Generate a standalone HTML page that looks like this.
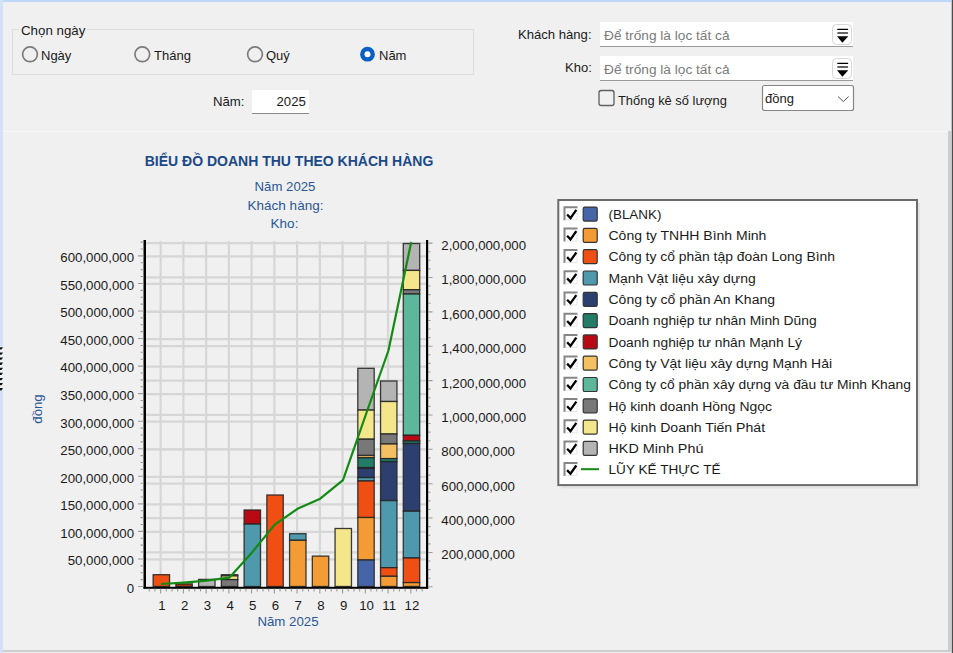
<!DOCTYPE html>
<html><head><meta charset="utf-8">
<style>
html,body{margin:0;padding:0;}
body{width:953px;height:653px;overflow:hidden;background:#f0f0f0;position:relative;font-family:"Liberation Sans",sans-serif;color:#1a1a1a;}
.a{position:absolute;white-space:nowrap;}
.t13{font-size:13px;line-height:15px;}
</style></head><body>
<!-- window frame -->
<div class="a" style="left:0;top:0;width:953px;height:2px;background:#bdd7f8"></div>
<div class="a" style="left:0;top:0;width:3px;height:653px;background:#d2e1f5"></div>
<div class="a" style="left:951px;top:0;width:1px;height:653px;background:#a9c8f2"></div>
<div class="a" style="left:952px;top:0;width:1px;height:653px;background:#5a4a3a"></div>
<div class="a" style="left:0;top:346px;width:3px;height:45px;background:#eef2f8"></div><svg class="a" style="left:0;top:0" width="4" height="653"><path d="M0 347.30H3L1.5 349.60H0Z" fill="#111"/><path d="M0 352.40H3L1.5 354.70H0Z" fill="#111"/><path d="M0 357.50H3L1.5 359.80H0Z" fill="#111"/><path d="M0 362.60H3L1.5 364.90H0Z" fill="#111"/><path d="M0 367.70H3L1.5 370.00H0Z" fill="#111"/><path d="M0 372.80H3L1.5 375.10H0Z" fill="#111"/><path d="M0 377.90H3L1.5 380.20H0Z" fill="#111"/><path d="M0 383.00H3L1.5 385.30H0Z" fill="#111"/><path d="M0 388.10H3L1.5 390.40H0Z" fill="#111"/></svg>

<!-- group box -->
<div class="a" style="left:12px;top:29px;width:460px;height:44px;border:1px solid #dcdcdc"></div>
<div class="a t13" style="left:19px;top:23px;padding:0 2px;background:#f0f0f0;font-size:13.3px">Chọn ngày</div>

<svg class="a" style="left:0;top:0" width="953" height="130">
 <circle cx="30" cy="54.3" r="7.4" fill="none" stroke="#7c7c7c" stroke-width="1.7"/>
 <circle cx="142.3" cy="54.3" r="7.4" fill="none" stroke="#7c7c7c" stroke-width="1.7"/>
 <circle cx="255" cy="54.3" r="7.4" fill="none" stroke="#7c7c7c" stroke-width="1.7"/>
 <circle cx="367.5" cy="54.2" r="7.4" fill="#0a5fc2"/><circle cx="367.5" cy="54.2" r="3" fill="#fff"/>
 <!-- checkbox -->
 <rect x="599" y="90.5" width="15" height="15" rx="2.2" fill="none" stroke="#5f5f5f" stroke-width="1.3"/>
</svg>
<div class="a t13" style="left:41px;top:48px">Ngày</div>
<div class="a t13" style="left:154px;top:48px">Tháng</div>
<div class="a t13" style="left:266px;top:48px">Quý</div>
<div class="a t13" style="left:379px;top:48px">Năm</div>

<div class="a t13" style="left:213px;top:94px;font-size:13.2px">Năm:</div>
<div class="a" style="left:252px;top:90px;width:57px;height:23px;background:#fff;border-bottom:1px solid #8a8a8a"></div>
<div class="a t13" style="left:276.5px;top:94px;font-size:13.2px">2025</div>

<!-- right filters -->
<div class="a t13" style="left:518px;top:26.7px;font-size:13.1px">Khách hàng:</div>
<div class="a" style="left:600px;top:22px;width:253px;height:24px;background:#fff;border-bottom:1px solid #9a9a9a"></div>
<div class="a t13" style="left:604px;top:27.5px;color:#7a7a7a;font-size:13.7px">Để trống là lọc tất cả</div>
<div class="a t13" style="left:565px;top:60.4px">Kho:</div>
<div class="a" style="left:600px;top:56px;width:253px;height:24px;background:#fff;border-bottom:1px solid #9a9a9a"></div>
<div class="a t13" style="left:604px;top:61.5px;color:#7a7a7a;font-size:13.7px">Để trống là lọc tất cả</div>
<svg class="a" style="left:0;top:0" width="953" height="130">
 <rect x="832.5" y="24.5" width="19" height="20" rx="4" fill="#fff" stroke="#d6d6d6"/>
 <rect x="837.2" y="28.8" width="11" height="1.3" rx="0.6" fill="#000"/>
 <rect x="837.2" y="32.3" width="11" height="1.4" rx="0.6" fill="#333"/>
 <path d="M837 36.2 H848.3 L842.4 42.8 Z" fill="#000"/>
 <rect x="832.5" y="58.5" width="19" height="20" rx="4" fill="#fff" stroke="#d6d6d6"/>
 <rect x="837.2" y="62.8" width="11" height="1.3" rx="0.6" fill="#000"/>
 <rect x="837.2" y="66.3" width="11" height="1.4" rx="0.6" fill="#333"/>
 <path d="M837 70.2 H848.3 L842.4 76.8 Z" fill="#000"/>
 <rect x="762.5" y="85.5" width="91" height="25" rx="2" fill="#fff" stroke="#858585" stroke-width="1.2"/>
 <path d="M838 96.5 L843.3 101.5 L848.6 96.5" fill="none" stroke="#555" stroke-width="1"/>
</svg>
<div class="a t13" style="left:618px;top:92.5px;font-size:12.9px">Thống kê số lượng</div>
<div class="a t13" style="left:765px;top:91px">đồng</div>

<!-- chart panel border -->
<div class="a" style="left:3px;top:131px;width:946px;height:1px;background:#f7f7f7"></div>
<div class="a" style="left:948px;top:131px;width:3px;height:521px;background:#cdcdcd"></div>
<div class="a" style="left:3px;top:650px;width:948px;height:2px;background:#cdcdcd"></div>

<div id="chart">
<svg class="a" style="left:0;top:0;font-family:&quot;Liberation Sans&quot;,sans-serif" width="953" height="653">
<path d="M160.65 241V586.5 M183.39 241V586.5 M206.13 241V586.5 M228.87 241V586.5 M251.61 241V586.5 M274.35 241V586.5 M297.09 241V586.5 M319.83 241V586.5 M342.57 241V586.5 M365.31 241V586.5 M388.05 241V586.5 M410.79 241V586.5" stroke="#d6d6d6" stroke-width="2.2" fill="none"/>
<path d="M146 559.45H426 M146 531.90H426 M146 504.35H426 M146 476.80H426 M146 449.25H426 M146 421.70H426 M146 394.15H426 M146 366.60H426 M146 339.05H426 M146 311.50H426 M146 283.95H426 M146 256.40H426" stroke="#d6d6d6" stroke-width="2.2" fill="none"/>
<path d="M146 552.43H426 M146 518.06H426 M146 483.69H426 M146 449.32H426 M146 414.95H426 M146 380.58H426 M146 346.21H426 M146 311.84H426 M146 277.47H426 M146 243.10H426" stroke="#d6d6d6" stroke-width="2.2" fill="none"/>
<rect x="153.15" y="574.70" width="16.4" height="11.80" fill="#f04f14" stroke="#262626" stroke-width="1.3" stroke-opacity="0.9"/>
<rect x="175.89" y="583.90" width="16.4" height="2.60" fill="#a8380f" stroke="#262626" stroke-width="1.3" stroke-opacity="0.9"/>
<rect x="198.63" y="579.40" width="16.4" height="7.10" fill="#b4b4b4" stroke="#262626" stroke-width="1.3" stroke-opacity="0.9"/>
<rect x="221.37" y="574.70" width="16.4" height="1.20" fill="#b4b4b4" stroke="#262626" stroke-width="1.3" stroke-opacity="0.9"/>
<rect x="221.37" y="575.90" width="16.4" height="3.70" fill="#f4e68a" stroke="#262626" stroke-width="1.3" stroke-opacity="0.9"/>
<rect x="221.37" y="579.60" width="16.4" height="6.90" fill="#787878" stroke="#262626" stroke-width="1.3" stroke-opacity="0.9"/>
<rect x="244.11" y="510.00" width="16.4" height="14.10" fill="#b80a12" stroke="#262626" stroke-width="1.3" stroke-opacity="0.9"/>
<rect x="244.11" y="524.10" width="16.4" height="62.40" fill="#4e99ab" stroke="#262626" stroke-width="1.3" stroke-opacity="0.9"/>
<rect x="266.85" y="495.00" width="16.4" height="91.50" fill="#f04f14" stroke="#262626" stroke-width="1.3" stroke-opacity="0.9"/>
<rect x="289.59" y="533.70" width="16.4" height="6.60" fill="#4e99ab" stroke="#262626" stroke-width="1.3" stroke-opacity="0.9"/>
<rect x="289.59" y="540.30" width="16.4" height="46.20" fill="#f39c35" stroke="#262626" stroke-width="1.3" stroke-opacity="0.9"/>
<rect x="312.33" y="556.10" width="16.4" height="30.40" fill="#f39c35" stroke="#262626" stroke-width="1.3" stroke-opacity="0.9"/>
<rect x="335.07" y="528.50" width="16.4" height="58.00" fill="#f4e68a" stroke="#262626" stroke-width="1.3" stroke-opacity="0.9"/>
<rect x="357.81" y="368.30" width="16.4" height="41.80" fill="#b4b4b4" stroke="#262626" stroke-width="1.3" stroke-opacity="0.9"/>
<rect x="357.81" y="410.10" width="16.4" height="29.10" fill="#f4e68a" stroke="#262626" stroke-width="1.3" stroke-opacity="0.9"/>
<rect x="357.81" y="439.20" width="16.4" height="16.30" fill="#787878" stroke="#262626" stroke-width="1.3" stroke-opacity="0.9"/>
<rect x="357.81" y="455.50" width="16.4" height="2.30" fill="#f4c062" stroke="#262626" stroke-width="1.3" stroke-opacity="0.9"/>
<rect x="357.81" y="457.80" width="16.4" height="9.80" fill="#227c68" stroke="#262626" stroke-width="1.3" stroke-opacity="0.9"/>
<rect x="357.81" y="467.60" width="16.4" height="0.80" fill="#b80a12" stroke="#262626" stroke-width="1.3" stroke-opacity="0.9"/>
<rect x="357.81" y="468.40" width="16.4" height="9.20" fill="#2c3f6e" stroke="#262626" stroke-width="1.3" stroke-opacity="0.9"/>
<rect x="357.81" y="477.60" width="16.4" height="3.40" fill="#4e99ab" stroke="#262626" stroke-width="1.3" stroke-opacity="0.9"/>
<rect x="357.81" y="481.00" width="16.4" height="36.50" fill="#f04f14" stroke="#262626" stroke-width="1.3" stroke-opacity="0.9"/>
<rect x="357.81" y="517.50" width="16.4" height="42.50" fill="#f39c35" stroke="#262626" stroke-width="1.3" stroke-opacity="0.9"/>
<rect x="357.81" y="560.00" width="16.4" height="26.50" fill="#4565a8" stroke="#262626" stroke-width="1.3" stroke-opacity="0.9"/>
<rect x="380.55" y="381.00" width="16.4" height="20.50" fill="#b4b4b4" stroke="#262626" stroke-width="1.3" stroke-opacity="0.9"/>
<rect x="380.55" y="401.50" width="16.4" height="32.50" fill="#f4e68a" stroke="#262626" stroke-width="1.3" stroke-opacity="0.9"/>
<rect x="380.55" y="434.00" width="16.4" height="10.00" fill="#787878" stroke="#262626" stroke-width="1.3" stroke-opacity="0.9"/>
<rect x="380.55" y="444.00" width="16.4" height="14.60" fill="#f4c062" stroke="#262626" stroke-width="1.3" stroke-opacity="0.9"/>
<rect x="380.55" y="458.60" width="16.4" height="3.00" fill="#227c68" stroke="#262626" stroke-width="1.3" stroke-opacity="0.9"/>
<rect x="380.55" y="461.60" width="16.4" height="39.00" fill="#2c3f6e" stroke="#262626" stroke-width="1.3" stroke-opacity="0.9"/>
<rect x="380.55" y="500.60" width="16.4" height="67.10" fill="#4e99ab" stroke="#262626" stroke-width="1.3" stroke-opacity="0.9"/>
<rect x="380.55" y="567.70" width="16.4" height="8.60" fill="#f04f14" stroke="#262626" stroke-width="1.3" stroke-opacity="0.9"/>
<rect x="380.55" y="576.30" width="16.4" height="10.20" fill="#f39c35" stroke="#262626" stroke-width="1.3" stroke-opacity="0.9"/>
<rect x="403.29" y="243.50" width="16.4" height="26.90" fill="#b4b4b4" stroke="#262626" stroke-width="1.3" stroke-opacity="0.9"/>
<rect x="403.29" y="270.40" width="16.4" height="19.30" fill="#f4e68a" stroke="#262626" stroke-width="1.3" stroke-opacity="0.9"/>
<rect x="403.29" y="289.70" width="16.4" height="4.30" fill="#787878" stroke="#262626" stroke-width="1.3" stroke-opacity="0.9"/>
<rect x="403.29" y="294.00" width="16.4" height="141.30" fill="#5db79b" stroke="#262626" stroke-width="1.3" stroke-opacity="0.9"/>
<rect x="403.29" y="435.30" width="16.4" height="5.70" fill="#b80a12" stroke="#262626" stroke-width="1.3" stroke-opacity="0.9"/>
<rect x="403.29" y="441.00" width="16.4" height="2.50" fill="#227c68" stroke="#262626" stroke-width="1.3" stroke-opacity="0.9"/>
<rect x="403.29" y="443.50" width="16.4" height="67.70" fill="#2c3f6e" stroke="#262626" stroke-width="1.3" stroke-opacity="0.9"/>
<rect x="403.29" y="511.20" width="16.4" height="46.80" fill="#4e99ab" stroke="#262626" stroke-width="1.3" stroke-opacity="0.9"/>
<rect x="403.29" y="558.00" width="16.4" height="24.60" fill="#f04f14" stroke="#262626" stroke-width="1.3" stroke-opacity="0.9"/>
<rect x="403.29" y="582.60" width="16.4" height="3.90" fill="#f39c35" stroke="#262626" stroke-width="1.3" stroke-opacity="0.9"/>
<rect x="143.5" y="240" width="2.5" height="348.5" fill="#000"/>
<rect x="426" y="240" width="2.2" height="348.5" fill="#000"/>
<rect x="143.5" y="586.8" width="284.7" height="2" fill="#000"/>
<path d="M138 586.50H143.5 M140.5 579.61H143.5 M140.5 572.73H143.5 M140.5 565.84H143.5 M138 558.95H143.5 M140.5 552.06H143.5 M140.5 545.17H143.5 M140.5 538.29H143.5 M138 531.40H143.5 M140.5 524.51H143.5 M140.5 517.62H143.5 M140.5 510.74H143.5 M138 503.85H143.5 M140.5 496.96H143.5 M140.5 490.07H143.5 M140.5 483.19H143.5 M138 476.30H143.5 M140.5 469.41H143.5 M140.5 462.52H143.5 M140.5 455.64H143.5 M138 448.75H143.5 M140.5 441.86H143.5 M140.5 434.98H143.5 M140.5 428.09H143.5 M138 421.20H143.5 M140.5 414.31H143.5 M140.5 407.42H143.5 M140.5 400.54H143.5 M138 393.65H143.5 M140.5 386.76H143.5 M140.5 379.88H143.5 M140.5 372.99H143.5 M138 366.10H143.5 M140.5 359.21H143.5 M140.5 352.32H143.5 M140.5 345.44H143.5 M138 338.55H143.5 M140.5 331.66H143.5 M140.5 324.77H143.5 M140.5 317.89H143.5 M138 311.00H143.5 M140.5 304.11H143.5 M140.5 297.22H143.5 M140.5 290.34H143.5 M138 283.45H143.5 M140.5 276.56H143.5 M140.5 269.68H143.5 M140.5 262.79H143.5 M138 255.90H143.5 M140.5 249.01H143.5 M140.5 242.12H143.5" stroke="#9a9a9a" stroke-width="1.1" fill="none"/>
<path d="M428 586.80H432.5 M428 578.21H430.5 M428 569.62H430.5 M428 561.02H430.5 M428 552.43H432.5 M428 543.84H430.5 M428 535.25H430.5 M428 526.65H430.5 M428 518.06H432.5 M428 509.47H430.5 M428 500.87H430.5 M428 492.28H430.5 M428 483.69H432.5 M428 475.10H430.5 M428 466.50H430.5 M428 457.91H430.5 M428 449.32H432.5 M428 440.73H430.5 M428 432.13H430.5 M428 423.54H430.5 M428 414.95H432.5 M428 406.36H430.5 M428 397.76H430.5 M428 389.17H430.5 M428 380.58H432.5 M428 371.99H430.5 M428 363.39H430.5 M428 354.80H430.5 M428 346.21H432.5 M428 337.62H430.5 M428 329.02H430.5 M428 320.43H430.5 M428 311.84H432.5 M428 303.25H430.5 M428 294.65H430.5 M428 286.06H430.5 M428 277.47H432.5 M428 268.88H430.5 M428 260.28H430.5 M428 251.69H430.5 M428 243.10H432.5" stroke="#9a9a9a" stroke-width="1.1" fill="none"/>
<path d="M149.28 588.8V591.5 M154.97 588.8V591.5 M160.65 588.8V593.5 M166.34 588.8V591.5 M172.02 588.8V591.5 M177.71 588.8V591.5 M183.39 588.8V593.5 M189.07 588.8V591.5 M194.76 588.8V591.5 M200.44 588.8V591.5 M206.13 588.8V593.5 M211.81 588.8V591.5 M217.50 588.8V591.5 M223.19 588.8V591.5 M228.87 588.8V593.5 M234.56 588.8V591.5 M240.24 588.8V591.5 M245.93 588.8V591.5 M251.61 588.8V593.5 M257.30 588.8V591.5 M262.98 588.8V591.5 M268.66 588.8V591.5 M274.35 588.8V593.5 M280.03 588.8V591.5 M285.72 588.8V591.5 M291.40 588.8V591.5 M297.09 588.8V593.5 M302.77 588.8V591.5 M308.46 588.8V591.5 M314.14 588.8V591.5 M319.83 588.8V593.5 M325.51 588.8V591.5 M331.20 588.8V591.5 M336.88 588.8V591.5 M342.57 588.8V593.5 M348.25 588.8V591.5 M353.94 588.8V591.5 M359.62 588.8V591.5 M365.31 588.8V593.5 M371.00 588.8V591.5 M376.68 588.8V591.5 M382.37 588.8V591.5 M388.05 588.8V593.5 M393.74 588.8V591.5 M399.42 588.8V591.5 M405.11 588.8V591.5 M410.79 588.8V593.5 M416.48 588.8V591.5 M422.16 588.8V591.5" stroke="#9a9a9a" stroke-width="1.1" fill="none"/>
<polyline points="161.05,584 183.79,582.6 206.53,580.7 229.27,577.7 252.01,552.5 274.75,524.6 297.49,508.8 320.23,498.7 342.97,480.2 365.71,415 388.45,350.5 411.19,242.3" fill="none" stroke="#138b13" stroke-width="2.2" stroke-linejoin="round"/>
<text x="134" y="592.80" text-anchor="end" font-size="13.25" fill="#1a1a1a">0</text>
<text x="134" y="565.25" text-anchor="end" font-size="13.25" fill="#1a1a1a">50,000,000</text>
<text x="134" y="537.70" text-anchor="end" font-size="13.25" fill="#1a1a1a">100,000,000</text>
<text x="134" y="510.15" text-anchor="end" font-size="13.25" fill="#1a1a1a">150,000,000</text>
<text x="134" y="482.60" text-anchor="end" font-size="13.25" fill="#1a1a1a">200,000,000</text>
<text x="134" y="455.05" text-anchor="end" font-size="13.25" fill="#1a1a1a">250,000,000</text>
<text x="134" y="427.50" text-anchor="end" font-size="13.25" fill="#1a1a1a">300,000,000</text>
<text x="134" y="399.95" text-anchor="end" font-size="13.25" fill="#1a1a1a">350,000,000</text>
<text x="134" y="372.40" text-anchor="end" font-size="13.25" fill="#1a1a1a">400,000,000</text>
<text x="134" y="344.85" text-anchor="end" font-size="13.25" fill="#1a1a1a">450,000,000</text>
<text x="134" y="317.30" text-anchor="end" font-size="13.25" fill="#1a1a1a">500,000,000</text>
<text x="134" y="289.75" text-anchor="end" font-size="13.25" fill="#1a1a1a">550,000,000</text>
<text x="134" y="262.20" text-anchor="end" font-size="13.25" fill="#1a1a1a">600,000,000</text>
<text x="441.3" y="559.43" font-size="13.25" fill="#1a1a1a">200,000,000</text>
<text x="441.3" y="525.06" font-size="13.25" fill="#1a1a1a">400,000,000</text>
<text x="441.3" y="490.69" font-size="13.25" fill="#1a1a1a">600,000,000</text>
<text x="441.3" y="456.32" font-size="13.25" fill="#1a1a1a">800,000,000</text>
<text x="441.3" y="421.95" font-size="13.25" fill="#1a1a1a">1,000,000,000</text>
<text x="441.3" y="387.58" font-size="13.25" fill="#1a1a1a">1,200,000,000</text>
<text x="441.3" y="353.21" font-size="13.25" fill="#1a1a1a">1,400,000,000</text>
<text x="441.3" y="318.84" font-size="13.25" fill="#1a1a1a">1,600,000,000</text>
<text x="441.3" y="284.47" font-size="13.25" fill="#1a1a1a">1,800,000,000</text>
<text x="441.3" y="250.10" font-size="13.25" fill="#1a1a1a">2,000,000,000</text>
<text x="161.85" y="610" text-anchor="middle" font-size="13.25" fill="#1a1a1a">1</text>
<text x="184.59" y="610" text-anchor="middle" font-size="13.25" fill="#1a1a1a">2</text>
<text x="207.33" y="610" text-anchor="middle" font-size="13.25" fill="#1a1a1a">3</text>
<text x="230.07" y="610" text-anchor="middle" font-size="13.25" fill="#1a1a1a">4</text>
<text x="252.81" y="610" text-anchor="middle" font-size="13.25" fill="#1a1a1a">5</text>
<text x="275.55" y="610" text-anchor="middle" font-size="13.25" fill="#1a1a1a">6</text>
<text x="298.29" y="610" text-anchor="middle" font-size="13.25" fill="#1a1a1a">7</text>
<text x="321.03" y="610" text-anchor="middle" font-size="13.25" fill="#1a1a1a">8</text>
<text x="343.77" y="610" text-anchor="middle" font-size="13.25" fill="#1a1a1a">9</text>
<text x="366.51" y="610" text-anchor="middle" font-size="13.25" fill="#1a1a1a">10</text>
<text x="389.25" y="610" text-anchor="middle" font-size="13.25" fill="#1a1a1a">11</text>
<text x="411.99" y="610" text-anchor="middle" font-size="13.25" fill="#1a1a1a">12</text>
<text x="288" y="626" text-anchor="middle" font-size="13.25" fill="#2a5794">Năm 2025</text>
<text transform="translate(41.5,409) rotate(-90)" text-anchor="middle" font-size="13.25" fill="#2a5794">đồng</text>
<text x="289" y="166" text-anchor="middle" font-size="14" font-weight="bold" fill="#1b4988">BIỂU ĐỒ DOANH THU THEO KHÁCH HÀNG</text>
<text x="285" y="191" text-anchor="middle" font-size="13.2" fill="#2a5794">Năm 2025</text>
<text x="285.5" y="209.6" text-anchor="middle" font-size="13.5" fill="#2a5794">Khách hàng:</text>
<text x="284.5" y="228.4" text-anchor="middle" font-size="13.5" fill="#2a5794">Kho:</text>
<path d="M919 203V487.5H561" stroke="#000" stroke-opacity="0.05" stroke-width="2" fill="none"/>
<rect x="558.3" y="200" width="358.7" height="285.1" fill="#fff" stroke="#6b6b6b" stroke-width="2"/>
<rect x="563.5" y="206.30" width="14" height="14" fill="#fff"/>
<path d="M564.5 220.30V207.30H577.5" stroke="#868686" stroke-width="2" fill="none"/>
<path d="M577 208.30V219.80H565.5" stroke="#e6e6e6" stroke-width="1" fill="none"/>
<path d="M567.1 214.50L570.5 218.10L576.3 209.90" stroke="#000" stroke-width="2.3" fill="none"/>
<rect x="583.2" y="207.10" width="14" height="14" rx="1.6" fill="#4565a8" stroke="#333" stroke-width="1.2"/>
<text x="608.5" y="218.80" font-size="13.7" fill="#1a1a1a" textLength="52.9" lengthAdjust="spacingAndGlyphs">(BLANK)</text>
<rect x="563.5" y="227.60" width="14" height="14" fill="#fff"/>
<path d="M564.5 241.60V228.60H577.5" stroke="#868686" stroke-width="2" fill="none"/>
<path d="M577 229.60V241.10H565.5" stroke="#e6e6e6" stroke-width="1" fill="none"/>
<path d="M567.1 235.80L570.5 239.40L576.3 231.20" stroke="#000" stroke-width="2.3" fill="none"/>
<rect x="583.2" y="228.40" width="14" height="14" rx="1.6" fill="#f39c35" stroke="#333" stroke-width="1.2"/>
<text x="608.5" y="240.10" font-size="13.7" fill="#1a1a1a" textLength="157.9" lengthAdjust="spacingAndGlyphs">Công ty TNHH Bình Minh</text>
<rect x="563.5" y="248.90" width="14" height="14" fill="#fff"/>
<path d="M564.5 262.90V249.90H577.5" stroke="#868686" stroke-width="2" fill="none"/>
<path d="M577 250.90V262.40H565.5" stroke="#e6e6e6" stroke-width="1" fill="none"/>
<path d="M567.1 257.10L570.5 260.70L576.3 252.50" stroke="#000" stroke-width="2.3" fill="none"/>
<rect x="583.2" y="249.70" width="14" height="14" rx="1.6" fill="#f04f14" stroke="#333" stroke-width="1.2"/>
<text x="608.5" y="261.40" font-size="13.7" fill="#1a1a1a" textLength="226.5" lengthAdjust="spacingAndGlyphs">Công ty cổ phần tập đoàn Long Bình</text>
<rect x="563.5" y="270.20" width="14" height="14" fill="#fff"/>
<path d="M564.5 284.20V271.20H577.5" stroke="#868686" stroke-width="2" fill="none"/>
<path d="M577 272.20V283.70H565.5" stroke="#e6e6e6" stroke-width="1" fill="none"/>
<path d="M567.1 278.40L570.5 282.00L576.3 273.80" stroke="#000" stroke-width="2.3" fill="none"/>
<rect x="583.2" y="271.00" width="14" height="14" rx="1.6" fill="#4e99ab" stroke="#333" stroke-width="1.2"/>
<text x="608.5" y="282.70" font-size="13.7" fill="#1a1a1a" textLength="147.2" lengthAdjust="spacingAndGlyphs">Mạnh Vật liệu xây dựng</text>
<rect x="563.5" y="291.50" width="14" height="14" fill="#fff"/>
<path d="M564.5 305.50V292.50H577.5" stroke="#868686" stroke-width="2" fill="none"/>
<path d="M577 293.50V305.00H565.5" stroke="#e6e6e6" stroke-width="1" fill="none"/>
<path d="M567.1 299.70L570.5 303.30L576.3 295.10" stroke="#000" stroke-width="2.3" fill="none"/>
<rect x="583.2" y="292.30" width="14" height="14" rx="1.6" fill="#2c3f6e" stroke="#333" stroke-width="1.2"/>
<text x="608.5" y="304.00" font-size="13.7" fill="#1a1a1a" textLength="166.5" lengthAdjust="spacingAndGlyphs">Công ty cổ phần An Khang</text>
<rect x="563.5" y="312.80" width="14" height="14" fill="#fff"/>
<path d="M564.5 326.80V313.80H577.5" stroke="#868686" stroke-width="2" fill="none"/>
<path d="M577 314.80V326.30H565.5" stroke="#e6e6e6" stroke-width="1" fill="none"/>
<path d="M567.1 321.00L570.5 324.60L576.3 316.40" stroke="#000" stroke-width="2.3" fill="none"/>
<rect x="583.2" y="313.60" width="14" height="14" rx="1.6" fill="#227c68" stroke="#333" stroke-width="1.2"/>
<text x="608.5" y="325.30" font-size="13.7" fill="#1a1a1a" textLength="208.1" lengthAdjust="spacingAndGlyphs">Doanh nghiệp tư nhân Minh Dũng</text>
<rect x="563.5" y="334.10" width="14" height="14" fill="#fff"/>
<path d="M564.5 348.10V335.10H577.5" stroke="#868686" stroke-width="2" fill="none"/>
<path d="M577 336.10V347.60H565.5" stroke="#e6e6e6" stroke-width="1" fill="none"/>
<path d="M567.1 342.30L570.5 345.90L576.3 337.70" stroke="#000" stroke-width="2.3" fill="none"/>
<rect x="583.2" y="334.90" width="14" height="14" rx="1.6" fill="#b80a12" stroke="#333" stroke-width="1.2"/>
<text x="608.5" y="346.60" font-size="13.7" fill="#1a1a1a" textLength="193.5" lengthAdjust="spacingAndGlyphs">Doanh nghiệp tư nhân Mạnh Lý</text>
<rect x="563.5" y="355.40" width="14" height="14" fill="#fff"/>
<path d="M564.5 369.40V356.40H577.5" stroke="#868686" stroke-width="2" fill="none"/>
<path d="M577 357.40V368.90H565.5" stroke="#e6e6e6" stroke-width="1" fill="none"/>
<path d="M567.1 363.60L570.5 367.20L576.3 359.00" stroke="#000" stroke-width="2.3" fill="none"/>
<rect x="583.2" y="356.20" width="14" height="14" rx="1.6" fill="#f4c062" stroke="#333" stroke-width="1.2"/>
<text x="608.5" y="367.90" font-size="13.7" fill="#1a1a1a" textLength="223.5" lengthAdjust="spacingAndGlyphs">Công ty Vật liệu xây dựng Mạnh Hải</text>
<rect x="563.5" y="376.70" width="14" height="14" fill="#fff"/>
<path d="M564.5 390.70V377.70H577.5" stroke="#868686" stroke-width="2" fill="none"/>
<path d="M577 378.70V390.20H565.5" stroke="#e6e6e6" stroke-width="1" fill="none"/>
<path d="M567.1 384.90L570.5 388.50L576.3 380.30" stroke="#000" stroke-width="2.3" fill="none"/>
<rect x="583.2" y="377.50" width="14" height="14" rx="1.6" fill="#5db79b" stroke="#333" stroke-width="1.2"/>
<text x="608.5" y="389.20" font-size="13.7" fill="#1a1a1a" textLength="302.4" lengthAdjust="spacingAndGlyphs">Công ty cổ phần xây dựng và đầu tư Minh Khang</text>
<rect x="563.5" y="398.00" width="14" height="14" fill="#fff"/>
<path d="M564.5 412.00V399.00H577.5" stroke="#868686" stroke-width="2" fill="none"/>
<path d="M577 400.00V411.50H565.5" stroke="#e6e6e6" stroke-width="1" fill="none"/>
<path d="M567.1 406.20L570.5 409.80L576.3 401.60" stroke="#000" stroke-width="2.3" fill="none"/>
<rect x="583.2" y="398.80" width="14" height="14" rx="1.6" fill="#787878" stroke="#333" stroke-width="1.2"/>
<text x="608.5" y="410.50" font-size="13.7" fill="#1a1a1a" textLength="163.5" lengthAdjust="spacingAndGlyphs">Hộ kinh doanh Hồng Ngọc</text>
<rect x="563.5" y="419.30" width="14" height="14" fill="#fff"/>
<path d="M564.5 433.30V420.30H577.5" stroke="#868686" stroke-width="2" fill="none"/>
<path d="M577 421.30V432.80H565.5" stroke="#e6e6e6" stroke-width="1" fill="none"/>
<path d="M567.1 427.50L570.5 431.10L576.3 422.90" stroke="#000" stroke-width="2.3" fill="none"/>
<rect x="583.2" y="420.10" width="14" height="14" rx="1.6" fill="#f4e68a" stroke="#333" stroke-width="1.2"/>
<text x="608.5" y="431.80" font-size="13.7" fill="#1a1a1a" textLength="156.6" lengthAdjust="spacingAndGlyphs">Hộ kinh Doanh Tiến Phát</text>
<rect x="563.5" y="440.60" width="14" height="14" fill="#fff"/>
<path d="M564.5 454.60V441.60H577.5" stroke="#868686" stroke-width="2" fill="none"/>
<path d="M577 442.60V454.10H565.5" stroke="#e6e6e6" stroke-width="1" fill="none"/>
<path d="M567.1 448.80L570.5 452.40L576.3 444.20" stroke="#000" stroke-width="2.3" fill="none"/>
<rect x="583.2" y="441.40" width="14" height="14" rx="1.6" fill="#b4b4b4" stroke="#333" stroke-width="1.2"/>
<text x="608.5" y="453.10" font-size="13.7" fill="#1a1a1a" textLength="94.9" lengthAdjust="spacingAndGlyphs">HKD Minh Phú</text>
<rect x="563.5" y="461.90" width="14" height="14" fill="#fff"/>
<path d="M564.5 475.90V462.90H577.5" stroke="#868686" stroke-width="2" fill="none"/>
<path d="M577 463.90V475.40H565.5" stroke="#e6e6e6" stroke-width="1" fill="none"/>
<path d="M567.1 470.10L570.5 473.70L576.3 465.50" stroke="#000" stroke-width="2.3" fill="none"/>
<rect x="581" y="468.20" width="18" height="2" fill="#138b13"/>
<text x="608.5" y="474.40" font-size="13.7" fill="#1a1a1a" textLength="112.1" lengthAdjust="spacingAndGlyphs">LŨY KẾ THỰC TẾ</text>
</svg>
</div>
</body></html>
